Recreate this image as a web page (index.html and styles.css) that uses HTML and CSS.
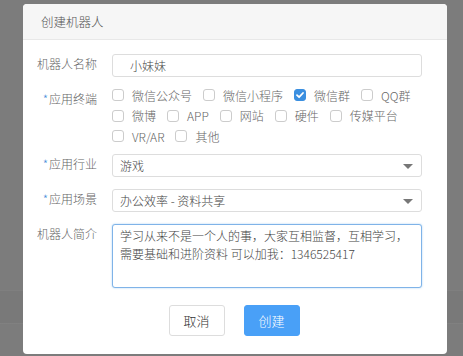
FILE: index.html
```html
<!DOCTYPE html>
<html lang="zh">
<head>
<meta charset="utf-8">
<title>创建机器人</title>
<link rel="stylesheet" href="styles.css">
</head>
<body>
<div class="modal">
  <div class="modal-header">创建机器人</div>
  <div class="modal-body">
    <div class="form">
      <div class="label">机器人名称</div>
      <div class="control"><div class="input">小妹妹</div></div>

      <div class="label"><span class="req">*</span>应用终端</div>
      <div class="control checks">
        <span class="opt"><i class="box"></i>微信公众号</span>
        <span class="opt"><i class="box"></i>微信小程序</span>
        <span class="opt"><i class="box checked"><svg viewBox="0 0 12 12" width="12" height="12"><path d="M3 6.2 L5.1 8.2 L9 4" fill="none" stroke="#fff" stroke-width="1.8" stroke-linecap="round" stroke-linejoin="round"/></svg></i>微信群</span>
        <span class="opt"><i class="box"></i>QQ群</span>
        <span class="opt"><i class="box"></i>微博</span>
        <span class="opt"><i class="box"></i>APP</span>
        <span class="opt"><i class="box"></i>网站</span>
        <span class="opt"><i class="box"></i>硬件</span>
        <span class="opt"><i class="box"></i>传媒平台</span>
        <span class="opt"><i class="box"></i>VR/AR</span>
        <span class="opt"><i class="box"></i>其他</span>
      </div>

      <div class="label"><span class="req">*</span>应用行业</div>
      <div class="control"><div class="select">游戏<i class="caret"></i></div></div>

      <div class="label"><span class="req">*</span>应用场景</div>
      <div class="control"><div class="select">办公效率 - 资料共享<i class="caret"></i></div></div>

      <div class="label">机器人简介</div>
      <div class="control"><div class="textarea">学习从来不是一个人的事，大家互相监督，互相学习，需要基础和进阶资料 可以加我：1346525417</div></div>
    </div>
    <div class="actions">
      <button class="btn">取消</button>
      <button class="btn primary">创建</button>
    </div>
  </div>
</div>
</body>
</html>
```

FILE: styles.css
```css
html, body {
  margin: 0;
  height: 100%;
}
body {
  background: linear-gradient(to bottom, #7c7c7c 0, #7c7c7c 290px, #858585 290px, #797979 291px, #797979 323px, #858585 323px, #7c7c7c 324px);
  font-family: "Noto Sans CJK SC", "Noto Sans", "Liberation Sans", sans-serif;
  font-size: 12px;
  font-weight: 300;
  color: #666;
  overflow: hidden;
}
.modal {
  margin: 4px 0 0 23px;
  width: 424px;
  height: 350px;
  background: #fff;
  border-radius: 4px;
  box-sizing: border-box;
}
.modal-header {
  height: 35px;
  line-height: 35px;
  padding-left: 18px;
  background: #f6f6f6;
  border-bottom: 1px solid #e8e8e8;
  border-radius: 4px 4px 0 0;
  font-size: 12.5px;
  color: #555;
}
.modal-body {
  padding: 14px 25px 0 0;
}
.form {
  display: grid;
  grid-template-columns: 74px 1fr;
  column-gap: 15px;
  row-gap: 12px;
}
.label {
  text-align: right;
  line-height: 20px;
  color: #666;
}
.req {
  color: #4a90d9;
  margin-right: 1px;
}
.input, .select, .textarea {
  box-sizing: border-box;
  border: 1px solid #ddd;
  border-radius: 3px;
  color: #444;
  background: #fff;
}
.input {
  height: 23px;
  line-height: 21px;
  padding-left: 17px;
}
.select {
  position: relative;
  height: 23px;
  line-height: 21px;
  padding-left: 7px;
}
.caret {
  position: absolute;
  right: 8px;
  top: 9px;
  width: 0;
  height: 0;
  border-left: 5px solid transparent;
  border-right: 5px solid transparent;
  border-top: 5px solid #777;
}
.textarea {
  height: 64px;
  padding: 2px 7px;
  line-height: 18px;
  border-color: #7fb3e8;
  box-shadow: 0 0 2px rgba(102, 175, 233, 0.6);
}
.checks {
  display: flex;
  flex-wrap: wrap;
  column-gap: 11px;
  margin: -4px 0 -5px;
}
.opt {
  display: inline-flex;
  align-items: center;
  height: 20.5px;
  color: #666;
}
.box {
  display: inline-flex;
  box-sizing: border-box;
  width: 12px;
  height: 12px;
  border: 1px solid #ccc;
  border-radius: 3px;
  margin-right: 8px;
  background: #fff;
}
.box.checked {
  background: #3b8fe0;
  border-color: #3b8fe0;
}
.box.checked svg {
  margin: -1px;
}
.actions {
  display: flex;
  justify-content: center;
  gap: 19px;
  margin-top: 17px;
  padding-left: 23px;
}
.btn {
  width: 56px;
  height: 31px;
  border: 1px solid #ddd;
  border-radius: 3px;
  background: #fff;
  color: #333;
  font-family: inherit;
  font-size: 13px;
  font-weight: 300;
  padding: 0;
}
.btn.primary {
  background: #49a0f7;
  border-color: #49a0f7;
  color: #fff;
}
```
